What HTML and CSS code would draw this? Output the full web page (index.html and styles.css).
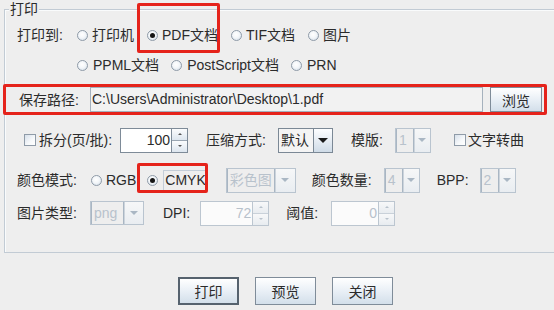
FILE: index.html
```html
<!DOCTYPE html>
<html lang="zh">
<head>
<meta charset="utf-8">
<title>打印</title>
<link rel="stylesheet" href="styles.css">
</head>
<body>
<div class="dialog">
  <div class="group">
    <div class="legend">打印</div>

    <div class="row r1">
      <span class="lbl">打印到:</span>
      <label class="radio"><i class="rb"></i><span>打印机</span></label>
      <label class="radio mark mark-pdf"><i class="rb on"></i><span>PDF文档</span></label>
      <label class="radio"><i class="rb"></i><span>TIF文档</span></label>
      <label class="radio"><i class="rb"></i><span>图片</span></label>
    </div>

    <div class="row r2">
      <span class="lbl"></span>
      <label class="radio"><i class="rb"></i><span>PPML文档</span></label>
      <label class="radio"><i class="rb"></i><span>PostScript文档</span></label>
      <label class="radio"><i class="rb"></i><span>PRN</span></label>
    </div>

    <div class="pathbox">
      <span class="lbl">保存路径:</span>
      <div class="pathfield">C:\Users\Administrator\Desktop\1.pdf</div>
      <div class="btn browse">浏览</div>
    </div>

    <div class="row r4">
      <label class="check c-split"><i class="cb"></i><span>拆分(页/批):</span></label>
      <div class="spin s-split">
        <div class="field">100</div>
        <div class="btns"><span class="up"></span><span class="down"></span></div>
      </div>
      <span class="txt t-compress">压缩方式:</span>
      <div class="combo c-default">
        <div class="val">默认</div>
        <div class="arr"><i></i></div>
      </div>
      <span class="txt t-template">模版:</span>
      <div class="combo dis c-one">
        <div class="val">1</div>
        <div class="arr"><i></i></div>
      </div>
      <label class="check c-curve"><i class="cb"></i><span>文字转曲</span></label>
    </div>

    <div class="row r5">
      <span class="lbl">颜色模式:</span>
      <label class="radio rgb"><i class="rb"></i><span>RGB</span></label>
      <label class="radio mark mark-cmyk cmyk"><i class="rb on"></i><span class="focus">CMYK</span></label>
      <div class="combo dis c-color">
        <div class="val">彩色图</div>
        <div class="arr"><i></i></div>
      </div>
      <span class="txt t-count">颜色数量:</span>
      <div class="combo dis c-four">
        <div class="val">4</div>
        <div class="arr"><i></i></div>
      </div>
      <span class="txt t-bpp">BPP:</span>
      <div class="combo dis c-two">
        <div class="val">2</div>
        <div class="arr"><i></i></div>
      </div>
    </div>

    <div class="row r6">
      <span class="lbl">图片类型:</span>
      <div class="combo dis c-png">
        <div class="val">png</div>
        <div class="arr"><i></i></div>
      </div>
      <span class="txt t-dpi">DPI:</span>
      <div class="spin dis s-dpi">
        <div class="field">72</div>
        <div class="btns"><span class="up"></span><span class="down"></span></div>
      </div>
      <span class="txt t-th">阈值:</span>
      <div class="spin dis s-th">
        <div class="field">0</div>
        <div class="btns"><span class="up"></span><span class="down"></span></div>
      </div>
    </div>
  </div>

  <div class="actions">
    <div class="btn big focused">打印</div>
    <div class="btn big">预览</div>
    <div class="btn big">关闭</div>
  </div>
</div>
</body>
</html>
```

FILE: styles.css
```css
html, body {
  margin: 0;
  padding: 0;
}
body {
  width: 554px;
  height: 310px;
  overflow: hidden;
  background: #eeeeee;
  font-family: "Liberation Sans", "Noto Sans CJK SC", sans-serif;
  font-size: 14px;
  color: #2b2b2b;
}

.dialog {
  width: 554px;
}

/* titled group box (its right edge lies outside the window) */
.group {
  margin: 9px 0 0 4px;
  width: 550px;
  height: 244px;
  box-sizing: border-box;
  border: 1px solid #c2cbd4;
  border-right: none;
  box-shadow: inset 1px 1px 0 #f9fbfc;
}
.legend {
  margin: -9px 0 0 4px;
  padding: 0 1px;
  width: max-content;
  line-height: 16px;
  background: #eeeeee;
}

.row {
  display: flex;
  align-items: center;
  height: 30px;
  padding-left: 12px;
  white-space: nowrap;
}
.r1 { margin-top: 3px; }
.r4 { margin-top: 10px; }
.r5 { margin-top: 10px; }
.r6 { margin-top: 3px; }

.lbl {
  flex: none;
  width: 60px;
  line-height: 18px;
}

/* radio buttons */
.radio {
  position: relative;
  display: flex;
  align-items: center;
  gap: 4px;
  height: 100%;
  margin-right: 13px;
  line-height: 18px;
}
.r2 .radio { margin-right: 12px; gap: 5px; }
.rb {
  position: relative;
  flex: none;
  width: 11px;
  height: 11px;
  box-sizing: border-box;
  border-radius: 50%;
  border: 1px solid #8f9ba8;
  background: radial-gradient(circle at 45% 40%, #ffffff 0%, #f3f6f9 45%, #cdd9e5 100%);
}
.rb.on::after {
  content: "";
  position: absolute;
  left: 2px;
  top: 2px;
  width: 5px;
  height: 5px;
  border-radius: 50%;
  background: #151515;
}

/* red annotation frames */
.mark::before {
  content: "";
  position: absolute;
  box-sizing: border-box;
  border: 3px solid #e5231b;
  border-radius: 2px;
  pointer-events: none;
}
.mark-pdf::before {
  left: -10px;
  top: -17px;
  width: 83px;
  height: 50px;
}
.mark-cmyk::before {
  left: -10px;
  top: -2px;
  width: 71px;
  height: 30px;
}
.rgb { margin-left: 14px; margin-right: 11px; }
.cmyk { margin-right: 0; }
.focus {
  border: 1px solid #c3cdd8;
  padding: 0 1px;
  line-height: 19px;
  margin-left: 1px;
}

/* path row */
.pathbox {
  display: flex;
  align-items: center;
  margin: 4px 0 0 -2px;
  width: 544px;
  height: 31px;
  box-sizing: border-box;
  border: 3px solid #e5231b;
  border-radius: 2px;
  padding-left: 13px;
}
.pathfield {
  margin-left: 11px;
  width: 393px;
  height: 25px;
  box-sizing: border-box;
  border: 1px solid #a5b1bd;
  background: #f2f2f2;
  padding-left: 1px;
  line-height: 23px;
  white-space: nowrap;
  overflow: hidden;
}
.btn {
  display: flex;
  align-items: center;
  justify-content: center;
  box-sizing: border-box;
  border: 1px solid #7f8c99;
  background: linear-gradient(#ffffff, #e7eef5 55%, #d3dfea);
}
.browse {
  margin-left: 7px;
  width: 52px;
  height: 25px;
}

/* checkbox */
.check {
  display: flex;
  align-items: center;
  gap: 3px;
  line-height: 18px;
}
.cb {
  flex: none;
  width: 12px;
  height: 12px;
  box-sizing: border-box;
  border: 1px solid #8f9ba8;
  background: linear-gradient(135deg, #d7e0ea, #f7f9fb 60%, #ffffff);
}
.c-split { margin-left: 7px; }
.c-curve { margin-left: 23px; gap: 2px; }

.txt { line-height: 18px; }
.t-compress { margin-left: 18px; }
.t-template { margin-left: 18px; }
.t-count { margin-left: 16px; }
.t-bpp { margin-left: 17px; }
.t-dpi { margin-left: 19px; }
.t-th { margin-left: 17px; }

/* spinner */
.spin {
  display: flex;
  height: 25px;
}
.spin .field {
  width: 52px;
  box-sizing: border-box;
  border: 1px solid #7e8b98;
  background: #ffffff;
  text-align: right;
  padding-right: 1px;
  line-height: 23px;
}
.spin .btns {
  width: 16px;
  display: flex;
  flex-direction: column;
  box-sizing: border-box;
  border: 1px solid #7e8b98;
  border-left: none;
}
.spin .btns span {
  flex: 1;
  display: flex;
  align-items: center;
  justify-content: center;
  background: linear-gradient(#fbfcfd, #dde6ef);
}
.spin .btns .up { border-bottom: 1px solid #9aa6b2; }
.spin .btns .up::after {
  content: "";
  border-left: 2px solid transparent;
  border-right: 2px solid transparent;
  border-bottom: 2px solid #555;
}
.spin .btns .down::after {
  content: "";
  border-left: 2px solid transparent;
  border-right: 2px solid transparent;
  border-top: 2px solid #555;
}
.s-split { margin-left: 8px; }
.s-dpi { margin-left: 10px; }
.s-dpi .field { width: 53px; }
.s-th { margin-left: 13px; }
.s-th .field { width: 48px; }

.spin.dis .field {
  border-color: #bcc6d0;
  background: #fbfbfb;
  color: #b7c1cb;
}
.spin.dis .btns { border-color: #bcc6d0; }
.spin.dis .btns .up { border-bottom-color: #c9d1d9; }
.spin.dis .btns span { background: linear-gradient(#f7f8f9, #e8ecf0); }
.spin.dis .btns .up::after { border-bottom-color: #b8c2cc; }
.spin.dis .btns .down::after { border-top-color: #b8c2cc; }

/* combo box */
.combo {
  display: flex;
  height: 25px;
  box-sizing: border-box;
  border: 1px solid #7b8895;
  background: #f1f1f1;
}
.combo .val {
  flex: 1;
  padding-left: 2px;
  line-height: 23px;
  white-space: nowrap;
}
.combo .arr {
  flex: none;
  width: 18px;
  display: flex;
  align-items: center;
  justify-content: center;
  border-left: 1px solid #7b8895;
  background: linear-gradient(#fdfeff, #e4ebf2 55%, #cfdbe7);
}
.combo .arr i {
  display: block;
  width: 0;
  height: 0;
  border-left: 5px solid transparent;
  border-right: 5px solid transparent;
  border-top: 5px solid #1a1a1a;
}
.combo.dis {
  border-color: #b9c4cf;
  background: #eeeeee;
}
.combo.dis .val {
  color: #b8c2cc;
  border-right: 1px solid #a9b6c3;
  border-left: 1px solid #a9b6c3;
}
.combo.dis .arr {
  border-left: 1px solid #ccd4dc;
  background: linear-gradient(#f6f7f8, #e9edf1);
}
.combo.dis .arr i { border-top-color: #aab7c4; border-left-width: 4px; border-right-width: 4px; border-top-width: 4px; }

.c-default { margin-left: 12px; width: 55px; }
.c-default .val { background: #f4f4f4; }
.c-one { margin-left: 12px; width: 36px; }
.c-color { margin-left: 18px; width: 70px; }
.c-four { margin-left: 12px; width: 36px; }
.c-two { margin-left: 11px; width: 36px; }
.c-png { margin-left: 13px; width: 54px; height: 24px; }
.c-one .arr, .c-four .arr, .c-two .arr { width: 15px; }
.c-color .arr { width: 19px; }

/* bottom buttons */
.actions {
  display: flex;
  justify-content: center;
  gap: 16px;
  margin-top: 24px;
  padding-left: 17px;
}
.btn.big {
  width: 61px;
  height: 28px;
}
.btn.focused {
  border: 2px solid #56626e;
}
```
